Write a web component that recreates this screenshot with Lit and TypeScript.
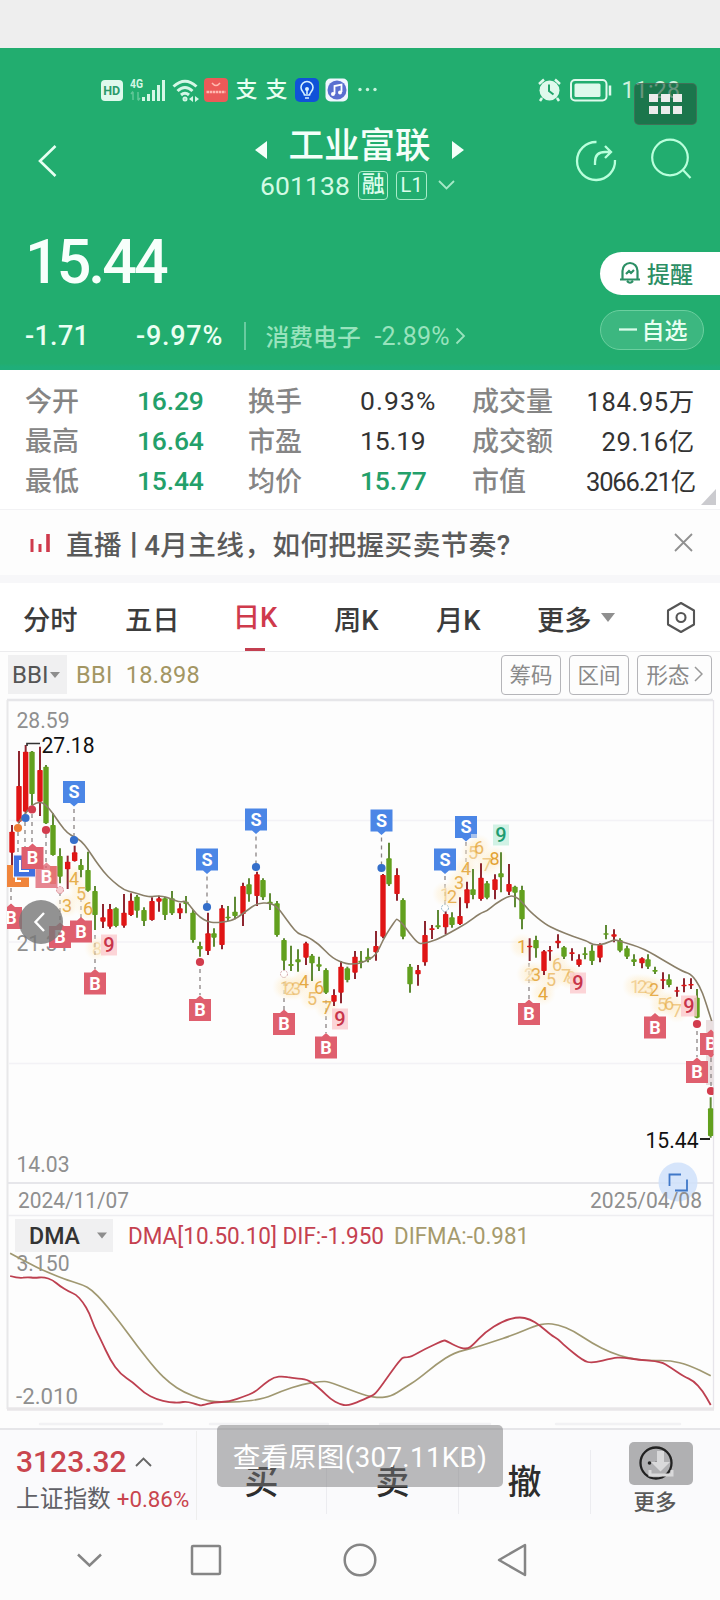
import { LitElement, html, svg, css } from "lit";
import { customElement } from "lit/decorators.js";

type Candle = [number, number, number, number, number, "r" | "g"];
type Pt = [number, number];

/* Candle rows: centre x, high, body top, body bottom, low, colour (in thirds of a pixel per block). */
const BLOCK_A: Candle[] = [
  [36, 405, 425, 488, 525, "r"], [57, 183, 288, 395, 400, "r"], [77, 165, 185, 365, 370, "r"],
  [96, 183, 185, 312, 345, "g"], [120, 170, 240, 335, 378, "r"], [138, 225, 230, 400, 402, "g"],
  [159, 370, 405, 495, 497, "g"], [180, 475, 498, 560, 580, "g"], [203, 497, 515, 538, 597, "r"],
  [224, 467, 487, 513, 515, "r"], [243, 507, 525, 540, 562, "g"], [264, 485, 540, 602, 605, "g"],
  [285, 588, 603, 675, 720, "g"], [309, 642, 682, 695, 714, "r"], [330, 642, 657, 710, 716, "r"],
  [348, 652, 655, 708, 712, "g"], [372, 612, 668, 707, 713, "r"], [393, 610, 632, 675, 678, "r"],
  [411, 615, 620, 662, 683, "g"], [432, 652, 660, 693, 708, "g"], [456, 622, 633, 690, 692, "r"],
  [477, 617, 625, 635, 665, "r"], [495, 620, 625, 675, 690, "g"], [516, 603, 625, 670, 675, "g"],
  [540, 640, 655, 670, 687, "r"], [558, 618, 635, 642, 670, "g"], [579, 660, 668, 750, 758, "g"],
  [600, 755, 768, 778, 800, "g"], [624, 668, 730, 783, 795, "r"], [642, 715, 730, 743, 770, "g"],
  [666, 645, 655, 765, 778, "r"], [684, 648, 680, 685, 693, "g"], [705, 620, 665, 678, 688, "g"],
];
const BLOCK_B: Candle[] = [
  [219, 278, 288, 372, 408, "r"], [237, 265, 283, 313, 335, "g"], [261, 245, 253, 318, 348, "r"],
  [279, 265, 270, 322, 330, "g"], [300, 310, 335, 342, 360, "g"], [321, 333, 340, 435, 440, "g"],
  [342, 445, 450, 512, 540, "g"], [363, 467, 522, 528, 543, "g"], [384, 478, 508, 517, 545, "g"],
  [408, 455, 460, 503, 525, "r"], [426, 492, 497, 520, 573, "g"], [447, 500, 523, 530, 543, "g"],
  [468, 535, 540, 608, 612, "g"], [492, 598, 615, 635, 648, "r"], [513, 513, 530, 608, 640, "r"],
  [532, 530, 535, 570, 577, "g"], [555, 483, 500, 548, 567, "r"], [573, 483, 512, 518, 535, "g"],
  [594, 475, 500, 510, 517, "g"], [618, 423, 468, 487, 512, "r"], [639, 252, 255, 440, 445, "r"],
  [657, 158, 205, 283, 288, "g"], [681, 235, 255, 312, 332, "r"], [699, 325, 330, 440, 448, "g"],
  [720, 522, 530, 583, 608, "g"], [744, 525, 540, 553, 587, "r"], [765, 393, 435, 517, 527, "r"],
  [786, 405, 415, 420, 447, "r"], [804, 360, 406, 412, 417, "g"],
];
const BLOCK_C: Candle[] = [
  [137, 365, 372, 412, 433, "r"], [156, 367, 382, 405, 413, "g"], [180, 322, 378, 402, 405, "r"],
  [201, 275, 298, 340, 355, "r"], [219, 237, 298, 315, 328, "g"], [243, 220, 263, 327, 332, "r"],
  [261, 273, 280, 323, 328, "g"], [285, 253, 268, 300, 328, "r"], [303, 187, 250, 262, 307, "g"],
  [327, 222, 282, 305, 315, "r"], [345, 287, 290, 308, 352, "g"], [366, 287, 300, 388, 418, "g"],
  [389, 445, 467, 471, 513, "r"], [408, 437, 450, 475, 503, "g"], [432, 480, 484, 543, 555, "r"],
  [450, 468, 480, 484, 512, "r"], [474, 433, 452, 460, 475, "r"], [492, 468, 472, 500, 507, "g"],
  [516, 475, 487, 492, 512, "r"], [537, 493, 508, 525, 530, "r"], [555, 472, 490, 495, 508, "g"],
  [576, 465, 482, 513, 525, "g"], [600, 460, 465, 503, 517, "r"], [618, 405, 430, 434, 448, "g"],
  [642, 418, 433, 440, 457, "r"], [660, 445, 450, 482, 487, "g"], [681, 467, 475, 500, 507, "g"],
  [702, 493, 508, 516, 528, "g"], [726, 502, 505, 520, 535, "r"], [744, 493, 508, 530, 537, "g"],
  [765, 530, 540, 545, 552, "g"], [789, 547, 568, 572, 597, "r"], [807, 553, 568, 585, 592, "g"],
  [831, 590, 601, 605, 620, "r"], [852, 565, 584, 588, 607, "r"], [873, 565, 582, 586, 597, "r"],
  [891, 597, 623, 683, 685, "g"], [932, 922, 955, 1038, 1043, "g"],
];

const shift = (rows: Candle[], x0: number, y0: number): Candle[] =>
  rows.map(([x, a, b, c, d, k]) => [x0 + x / 3, y0 + a / 3, y0 + b / 3, y0 + c / 3, y0 + d / 3, k]);
const CANDLES: Candle[] = [...shift(BLOCK_A, 0, 690), ...shift(BLOCK_B, 170, 790), ...shift(BLOCK_C, 400, 790)];

const scale = (pts: Pt[], x0: number, y0: number, kx: number): Pt[] =>
  pts.map(([x, y]) => [x0 + x / kx, y0 + y / 3]);

const BBI: Pt[] = [
  ...scale([[54, 400], [70, 378], [96, 345], [120, 335], [138, 345], [159, 370], [180, 402], [203, 430], [222, 440], [243, 452], [264, 478], [285, 510], [310, 545], [340, 575], [372, 600], [400, 607], [432, 617], [450, 621], [477, 617], [500, 622], [516, 628], [540, 637], [558, 632], [579, 660], [600, 682], [622, 695], [645, 698], [680, 695]], 0, 690, 3),
  ...scale([[195, 388], [230, 362], [261, 340], [300, 338], [321, 350], [342, 378], [363, 407], [384, 432], [408, 438], [447, 462], [487, 505], [530, 522], [555, 522], [580, 517], [618, 497], [639, 450], [660, 415], [679, 388], [682, 388], [699, 402], [720, 432], [742, 457]], 170, 790, 3),
  ...scale([[65, 462], [110, 450], [150, 428], [200, 400], [240, 370], [262, 362], [285, 342], [325, 318], [345, 318], [366, 335], [390, 365], [435, 402], [470, 420], [520, 440], [560, 452], [580, 466], [615, 462], [642, 448], [665, 455], [730, 475], [800, 517], [850, 545], [875, 553], [900, 590], [915, 630], [935, 693]], 400, 790, 3),
];
const DIF = scale([[22, 438], [40, 445], [60, 441], [75, 444], [95, 441], [115, 450], [130, 468], [150, 485], [165, 493], [180, 515], [195, 550], [205, 590], [220, 630], [240, 690], [262, 732], [290, 757], [315, 790], [340, 808], [370, 817], [390, 818], [407, 814], [435, 826], [439, 826], [465, 817], [500, 815], [530, 800], [555, 787], [575, 762], [597, 741], [618, 739], [635, 744], [665, 748], [680, 757], [700, 780], [720, 808], [740, 823], [757, 827], [775, 818], [810, 798], [820, 788], [850, 730], [874, 685], [880, 682], [895, 681], [925, 657], [966, 631], [971, 632], [1000, 653], [1018, 657], [1030, 645], [1055, 608], [1095, 573], [1130, 560], [1155, 568], [1175, 585], [1200, 615], [1215, 627], [1230, 647], [1270, 692], [1290, 700], [1335, 684], [1355, 682], [1390, 689], [1440, 695], [1460, 712], [1490, 740], [1510, 752], [1530, 782], [1548, 825]], 0, 1130, 2.178);
const DIFMA = scale([[22, 370], [60, 398], [100, 425], [150, 452], [180, 464], [200, 480], [225, 515], [260, 575], [300, 650], [340, 720], [370, 760], [400, 787], [440, 808], [465, 816], [520, 817], [575, 806], [610, 785], [660, 762], [700, 754], [715, 755], [760, 778], [800, 798], [825, 803], [850, 800], [880, 775], [910, 748], [950, 703], [990, 667], [1030, 655], [1070, 637], [1120, 614], [1165, 588], [1190, 580], [1215, 584], [1250, 603], [1290, 640], [1330, 668], [1370, 685], [1410, 692], [1460, 691], [1500, 705], [1548, 737]], 0, 1130, 2.178);

/* Smooth curve through the points: quadratic segments joined at midpoints. */
const curve = (p: Pt[]) => {
  let d = `M${p[0][0].toFixed(1)} ${p[0][1].toFixed(1)}`;
  for (let i = 1; i < p.length - 1; i++) {
    const mx = (p[i][0] + p[i + 1][0]) / 2, my = (p[i][1] + p[i + 1][1]) / 2;
    d += `Q${p[i][0].toFixed(1)} ${p[i][1].toFixed(1)} ${mx.toFixed(1)} ${my.toFixed(1)}`;
  }
  const l = p[p.length - 1];
  return d + `L${l[0].toFixed(1)} ${l[1].toFixed(1)}`;
};

/* box centre x, y, signal dot y */
const SELL: [number, number, number][] = [[74, 792, 840], [207, 859.5, 907], [256, 819.5, 867], [381.5, 820.5, 868], [445, 859.5, 0], [466, 827, 0]];
const BUY: [number, number, number][] = [[95, 983.5, 0], [200, 1010, 962], [284, 1024, 0], [326, 1047.5, 0], [529, 1014, 0], [655, 1027.5, 0], [697, 1072, 1024]];
const COUNTS: [string, number, number, number][] = [
  ["4", 74, 878, .85], ["5", 81, 893, .75], ["3", 67, 905, .85], ["6", 88, 908, .9], ["8", 97, 948, .25],
  ["1", 285, 987, .45], ["2", 290, 988, .45], ["3", 296, 988, .5], ["4", 304, 981, .9], ["5", 312, 998, .65], ["6", 319, 987, .9], ["7", 327, 1007, .85],
  ["1", 445, 894, .35], ["2", 452, 896, .8], ["3", 459, 882, .85], ["4", 466, 868, .85], ["5", 473, 852, .5], ["6", 479, 847, .75], ["7", 487, 864, .5], ["8", 494.5, 858, 1],
  ["1", 522, 946, .95], ["2", 529, 974, .25], ["3", 536, 974, .85], ["4", 543, 993, .95], ["5", 551, 979, .6], ["6", 557, 964, .6], ["7", 566, 975, .5], ["8", 571, 977, .4],
  ["1", 635, 986, .4], ["2", 642, 986, .45], ["3", 649, 987, .35], ["2", 654, 989, .85], ["5", 662, 1004, .5], ["6", 669, 1003, .6], ["7", 677, 1010, .5],
];
const NINES: [number, number, boolean][] = [[109, 945, false], [340, 1019, false], [501, 835, true], [578, 983, false], [689, 1006, false]];

const label = (x: number, y: number, w: number, t: string, cls: string, size = 22) =>
  svg`<text class=${cls} x=${x} y=${y} font-size=${size} textLength=${w} lengthAdjust="spacingAndGlyphs">${t}</text>`;
const dot = (x: number, y: number, c: string) => svg`<circle cx=${x} cy=${y} r="4.1" fill=${c} />`;
const leader = (x: number, a: number, b: number) =>
  svg`<path d=${`M${x} ${a}V${b}`} stroke="#8b8484" stroke-width="1.3" stroke-dasharray="4 4" />`;
const sellBox = (x: number, y: number) => svg`
  <path d=${`M${x - 11} ${y - 11}h22v22h-7l-4 3.5l-4 -3.5h-7z`} fill="#4b86e6" />
  <text class="tag" x=${x} y=${y + 6.3}>S</text>`;
const buyBox = (x: number, y: number, o = 1) => svg`<g opacity=${o}>
  <path d=${`M${x - 11} ${y - 11}h7l4 -3.5l4 3.5h7v22h-22z`} fill="#df5f6e" />
  <text class="tag" x=${x} y=${y + 6.3}>B</text></g>`;

@customElement("stock-chart")
export class StockChart extends LitElement {
  static styles = css`
    :host { display: block; }
    svg { display: block; font-family: Roboto, "Liberation Sans", sans-serif; }
    .axis { fill: #8f8f8f; }
    .black { fill: #111; }
    .dark { fill: #333; font-weight: 500; }
    .red { fill: #c54150; }
    .gold { fill: #a59a6c; }
    .tag { fill: #fff; font-size: 18px; font-weight: 700; text-anchor: middle; }
    .count { fill: #e3a233; font-size: 18px; text-anchor: middle; }
    .nine { font-size: 20px; font-weight: 500; text-anchor: middle; }
  `;
  render() {
    return html`<svg width="720" height="732" viewBox="0 696 720 732" fill="none">
      <defs>
        <clipPath id="plot"><rect x="7" y="699" width="706.5" height="500" /></clipPath>
        <radialGradient id="glow"><stop offset="0" stop-color="#fdebc4" stop-opacity=".6" /><stop offset=".6" stop-color="#feefd2" stop-opacity=".4" /><stop offset="1" stop-color="#fff4e0" stop-opacity="0" /></radialGradient>
      </defs>
      <path d="M7 700H713" stroke="#e6e6e9" stroke-width="2.4" />
      <path d="M7.5 700V1409" stroke="#e8e8e9" stroke-width="2" />
      <path d="M713.5 700V1409" stroke="#e6e4ea" stroke-width="1.3" />
      <path d="M9 820.5H713M9 942H713M9 1063.5H713" stroke="#f3f2f6" stroke-width="1.5" />
      <path d="M8 1183H713" stroke="#e6e6ea" stroke-width="2" />
      <path d="M8 1215.5H713" stroke="#eeeef1" stroke-width="1.5" />
      <path d="M7 1409H714" stroke="#e8e6e8" stroke-width="3.5" />
      <path d="M40 1424H162M210 1424H328M380 1424H490M556 1424H680" stroke="#f2f2f4" stroke-width="2.5" stroke-linecap="round" />

      ${label(16.5, 728, 53, "28.59", "axis")}
      ${label(16.5, 951, 53, "21.31", "axis")}
      ${label(16.5, 1171.5, 53, "14.03", "axis")}
      ${label(18, 1207.5, 111, "2024/11/07", "axis")}

      <g clip-path="url(#plot)">
        ${leader(18, 832, 865)}${leader(25, 822, 855)}${leader(32, 814, 846)}${leader(46, 834, 868)}${leader(11, 888, 906)}
        ${leader(60, 892, 925)}${leader(81, 898, 920)}${leader(95, 935, 969)}${leader(284, 974, 1010)}${leader(326, 1000, 1033)}${leader(529, 963, 1000)}${leader(445, 876, 908)}${leader(466, 842, 872)}
        <rect x="706" y="1020" width="8" height="65" fill="#e9dfe0" />${leader(711, 1058, 1087)}
        <circle cx="60" cy="890" r="3.5" fill="#f6cfd2" stroke="#dc8e95" stroke-dasharray="2 1" />
        <circle cx="284" cy="974" r="3.5" fill="#fff" stroke="#d3a5aa" stroke-dasharray="2 1" />
        <circle cx="445" cy="908" r="3.5" fill="#fff" stroke="#8fb4c8" stroke-dasharray="2 1" />
        ${COUNTS.map(([, x, y]) => svg`<circle cx=${x} cy=${y} r="13" fill="url(#glow)" />`)}
        ${CANDLES.map(([x, a, b, c, d, k]) => svg`
          <path d=${`M${x} ${a}V${d}`} stroke=${k === "r" ? "#8e2630" : "#5f8a35"} stroke-width="2" />
          <rect x=${x - 2.7} y=${b} width="5.4" height=${Math.max(c - b, 1.5)} rx=".8" fill=${k === "r" ? "#e01515" : "#62a01e"} />`)}
        <path d=${curve(BBI)} stroke="#8a7f68" stroke-width="1.6" />
        ${COUNTS.map(([t, x, y, o]) => svg`<text class="count" x=${x} y=${y + 6.5} opacity=${o}>${t}</text>`)}
        ${NINES.map(([x, y, up]) => svg`
          <rect x=${x - 8} y=${y - 10.5} width="16" height="21" fill=${up ? "#c5efdf" : "#fbc9cd"} opacity=".8" />
          <text class="nine" x=${x} y=${y + 7} fill=${up ? "#1f9c70" : "#c8344a"}>9</text>`)}
        ${SELL.map(([x, y, d]) => svg`${d ? svg`${leader(x, y + 17, d - 3)}${dot(x, d, "#356fca")}` : ""}${sellBox(x, y)}`)}
        <path d="M471 834h6v4h-6z" fill="#a9c2ec" />
        ${BUY.map(([x, y, d]) => svg`${d ? svg`${leader(x, d + 7, y - 15)}${dot(x, d, "#d23c4d")}` : ""}${buyBox(x, y)}`)}
        ${buyBox(711, 1044)}<path d="M707 1054l4 4l4 -4z" fill="#df5f6e" />
        ${dot(711, 1091, "#d23c4d")}
        <rect x="7" y="865" width="22" height="22" fill="#f0853c" /><path d="M16 872v9h5" stroke="#fff" stroke-width="2" />
        <rect x="13.5" y="855" width="22" height="22" fill="#4070e0" stroke="#f5f2fa" stroke-width="1" /><path d="M20 860v11h9" stroke="#fff" stroke-width="2" />
        <rect x="50" y="866" width="6" height="18" fill="#f6b183" />
        ${buyBox(46.5, 877, .75)}${buyBox(32.5, 858)}
        ${buyBox(11, 918)}${buyBox(60, 937)}${buyBox(81, 931.5)}
        ${dot(18, 828, "#ee7d33")}${dot(25.5, 818, "#356fca")}${dot(32, 809.5, "#d23c4d")}${dot(46, 830, "#d23c4d")}
      </g>
      <path d="M27 746V743.5H40" stroke="#333" stroke-width="1.7" />
      ${label(41.5, 753, 53, "27.18", "black")}
      <circle cx="41" cy="922" r="22" fill="#777" opacity=".8" />
      <path d="M44 913L35.5 922L44 931" stroke="#fff" stroke-width="2.4" />
      ${label(645.5, 1148, 53, "15.44", "black")}
      <path d="M700 1139H710" stroke="#222" stroke-width="2" />

      <circle cx="678" cy="1182" r="19.5" fill="#cfe0fa" opacity=".85" />
      <path d="M669.5 1186V1174.5H681M675 1190.5H687V1179.5" stroke="#4078c8" stroke-width="1.8" />
      ${label(590, 1207.5, 112, "2025/04/08", "axis")}

      <rect x="15" y="1219" width="98" height="33" fill="#f0f0f1" />
      ${label(29, 1244, 51, "DMA", "dark", 23)}
      <path d="M97 1232.5h10l-5 6z" fill="#8d8d8d" />
      ${label(128, 1244, 256, "DMA[10.50.10] DIF:-1.950", "red", 23)}
      ${label(394, 1244, 135, "DIFMA:-0.981", "gold", 23)}
      ${label(16.5, 1271, 53, "3.150", "axis")}
      ${label(16, 1404, 62, "-2.010", "axis")}
      <path d=${curve(DIFMA)} stroke="#a09871" stroke-width="1.7" />
      <path d=${curve(DIF)} stroke="#bd4050" stroke-width="1.8" />
    </svg>`;
  }
}

const STATS: [string, string, string, string, string, string][] = [
  ["今开", "16.29", "换手", "0.93%", "成交量", "184.95万"],
  ["最高", "16.64", "市盈", "15.19", "成交额", "29.16亿"],
  ["最低", "15.44", "均价", "15.77", "市值", "3066.21亿"],
];

@customElement("app-root")
export class AppRoot extends LitElement {
  static styles = css`
    :host { display: block; width: 720px; height: 1600px; overflow: hidden; position: relative; background: #fdfdfd;
      font-family: Roboto, "Noto Sans CJK SC", sans-serif; color: #333; white-space: nowrap; }
    * { box-sizing: border-box; }
    svg { display: block; flex: none; }
    .gap-top { height: 48px; background: #eee; }
    .hero { height: 322px; background: linear-gradient(#22ad6f 98%, #1fae79 99%); color: #eafff2; }
    .status { height: 84px; padding-left: 101px; display: flex; align-items: center; }
    .hd { width: 21.5px; height: 21px; border-radius: 4px; background: #dff9ec; color: #2b9a6a; font: 700 12.5px/21px Roboto; text-align: center; }
    .sig { margin-left: 7px; } .wifi { margin-left: 6px; } .app { margin-left: 4px; } .app2 { margin-left: 7px; } .app3 { margin-left: 6px; }
    .dots { margin-left: 9px; } .alarm { margin-left: 159px; } .batt { margin-left: 8px; }
    .zhi { font-size: 22px; font-weight: 500; width: 22px; margin-left: 8px; line-height: 24px; }
    .clock { font-size: 23px; letter-spacing: .3px; margin-left: 9px; opacity: .85; }
    .title { display: flex; height: 78px; padding-left: 38px; }
    .back { margin-top: 12px; }
    .names { margin-left: 199px; width: 207px; }
    .name { display: flex; align-items: center; height: 36px; width: 209px; justify-content: space-between; margin-left: -2px; font-size: 35.5px; font-weight: 500; color: #f4fff9; line-height: 36px; }
    .name span { margin-top: -8px; }
    .code { display: flex; align-items: center; height: 38px; margin: -2px 0 0 3px; font-size: 26.5px; color: #d2fae4; letter-spacing: .1px; }
    .chip { border: 1.5px solid #a8ecc9; border-radius: 4px; width: 30.5px; height: 29px; margin-left: 8px; display: grid; place-items: center; font-size: 23px; line-height: 26px; color: #dcfcec; font-weight: 500; }
    .chip.l { font-size: 20px; font-weight: 400; }
    .drop { margin-left: 11px; }
    .share { margin: 8px 0 0 111px; } .search { margin: 6px 0 0 33px; }
    .price-row { display: flex; justify-content: space-between; height: 100px; }
    .price { font-size: 61px; font-weight: 500; line-height: 105px; padding-left: 25px; letter-spacing: -3px; color: #f7fffb; }
    .pill { display: flex; align-items: center; height: 43px; width: 120px; border-radius: 22px 0 0 22px; background: #fff; color: #2c8f65; font-size: 23px; font-weight: 500; padding: 0 0 2px 19px; gap: 6px; margin-top: 42px; }
    .change-row { display: flex; align-items: center; height: 46px; margin-top: 3px; font-size: 27px; font-weight: 500; }
    .chg { width: 86px; margin-left: 25px; letter-spacing: .3px; } .pct { width: 108px; margin-left: 25px; letter-spacing: .75px; }
    .bar { width: 1.5px; height: 28px; background: #69cba0; }
    .sector { font-size: 23.8px; font-weight: 500; color: #98e3bd; margin: -2px 0 0 20px; width: 109px; }
    .spct { font-size: 25px; font-weight: 400; color: #98e3bd; width: 80px; letter-spacing: .2px; }
    .watch { width: 104px; height: 40px; border: 1.5px solid #6bcf9f; background: rgba(255,255,255,.12); border-radius: 21px; display: flex; align-items: center; margin: -12px 0 0 134px; padding: 0 0 2px 18px; gap: 5px; font-size: 23px; }
    .stats { height: 140px; padding: 12px 0 0 25px; display: grid; grid-template: repeat(3, 40px) / 112px 111px 112px 112px 84px 139px; align-items: center; font-size: 27px; background: #fff; position: relative; border-bottom: 1.5px solid #f2f2f4; }
    .k { color: #858585; font-weight: 500; } .g { color: #23a06a; font-weight: 500; } .v { color: #333; }
    .k, .v { line-height: 38px; } .num { letter-spacing: -.2px; font-size: 26.5px; padding-bottom: 3px; line-height: 35px; }
    .pc { letter-spacing: 1.1px; }
    .end { text-align: right; font-size: 25.5px; letter-spacing: .65px; }
    .tight { letter-spacing: -1.15px; }
    .corner { position: absolute; right: 4px; bottom: 4px; width: 15px; height: 16px; background: #cbcbcf; clip-path: polygon(100% 0, 100% 100%, 0 100%); }
    .news { height: 65px; display: flex; align-items: center; padding: 0 27px 0 30px; font-size: 27.6px; color: #5a5a5a; font-weight: 500; }
    .news .t { flex: 1; margin-left: 16px; letter-spacing: .45px; }
    .news .sep { margin: 0 -4px 0 -2px; }
    .split { height: 8px; background: #f7f7f9; }
    .tabs { height: 69px; border-bottom: 1.5px solid #ececee; display: grid; grid-template-columns: 102px 108px 101px 102px 101px 129px 1fr; align-items: center; padding: 1px 0 0 23px; font-size: 27.3px; font-weight: 500; color: #3c3c3c; background: #fff; }
    .on { color: #cf3a4c; height: 100%; width: 44px; display: flex; flex-direction: column; align-items: center; justify-content: space-between; padding-top: 15px; line-height: 38px; }
    .on i { width: 20px; height: 3.5px; background: #c33f50; }
    .more { display: flex; align-items: center; gap: 9px; }
    .ind { height: 44px; padding: 3px 8px 2px; display: flex; align-items: center; gap: 8px; }
    .bbi { width: 59px; height: 39px; background: #f0f0f1; display: flex; align-items: center; padding-left: 4px; font-size: 24px; gap: 2px; color: #555; }
    .gold { font-size: 23.5px; color: #a39663; flex: 1; display: flex; gap: 13px; letter-spacing: .35px; margin-left: 1px; }
    .btn { border: 1.5px solid #b5b5b9; border-radius: 4px; height: 40px; width: 60px; display: flex; justify-content: center; align-items: center; font-size: 21.5px; color: #8a8a8a; gap: 4px; padding-bottom: 2px; }
    .btn.w { width: 75px; }
    .dock { height: 92px; background: #fafafc; border-top: 2.5px solid #e6e6e9; display: grid; grid-template-columns: 197px 130px 132px 132px 1fr; align-items: center; }
    .idx { padding-left: 16px; height: 89px; border-right: 1px solid #eee; }
    .i1 { display: flex; align-items: center; gap: 8px; font-size: 30px; font-weight: 500; color: #c9454e; height: 38px; margin-top: 12px; line-height: 38px; }
    .i2 { display: flex; align-items: center; gap: 6px; font-size: 23.7px; color: #606066; line-height: 36px; }
    .i2 b { font-size: 22.3px; font-weight: 400; color: #c9454e; }
    .act { font-size: 34px; font-weight: 500; text-align: center; color: #2d2d2d; height: 64px; border-right: 1px solid #ececf0; line-height: 65px; margin-top: 14px; }
    .dmore { display: flex; flex-direction: column; align-items: center; font-size: 21.5px; font-weight: 500; color: #5a5a5a; line-height: 30px; gap: 3px; padding: 9px 1px 0 0; }
    .shade { width: 64px; height: 43px; border-radius: 5px; background: #b0b0b2; margin-left: 11px; }
    .nav { height: 80px; display: flex; align-items: center; background: #fcfcfc; padding-left: 76px; }
    .n2 { margin-left: 87px; } .n3 { margin-left: 121px; } .n4 { margin-left: 120px; }
    .grid-btn { position: absolute; left: 634px; top: 83px; width: 63px; height: 42px; border-radius: 5px; background: rgba(22,72,48,.55); border: 1px solid rgba(90,110,95,.6); display: grid; grid-template: repeat(2, 8.5px) / repeat(3, 8.5px); gap: 3.3px; place-content: center; }
    .grid-btn i { background: #ececec; }
    .toast { position: absolute; left: 217px; top: 1425px; width: 286px; height: 62px; border-radius: 5px; background: rgba(120,120,122,.5); color: #fff; font-size: 27.6px; display: grid; place-items: center; line-height: 66px; letter-spacing: .4px; }
  `;
  render() {
    return html`
      <div class="gap-top"></div>
      <div class="hero">
        <div class="status">
          <span class="hd">HD</span>
          <svg class="sig" width="36" height="24" viewBox="0 0 36 24" fill="#d5f7e6">
            <text x="0" y="10" font-size="13" font-weight="700" textLength="13" lengthAdjust="spacingAndGlyphs" font-family="Roboto">4G</text>
            <path d="M3 14v8M1 16l2-2.5M8 14v8M10 20l-2 2.5" stroke="#62c799" stroke-width="1.5" />
            <path d="M12 19h3v4h-3zM17 16h3v7h-3zM22 12h3v11h-3zM27 7h3v16h-3zM32 2h3v21h-3z" />
          </svg>
          <svg class="wifi" width="28" height="24" viewBox="0 0 28 24" fill="none" stroke="#d5f7e6" stroke-width="3">
            <path d="M1.5 8.5Q13 -2 24.5 8.5M5.5 13Q13 6 20.5 13M9 17Q13 13.5 17 17" /><circle cx="13" cy="21" r="1" /><path d="M21 18l-4 3l4 3zM23 18l4 3l-4 3z" fill="#d5f7e6" stroke="none" />
          </svg>
          <svg class="app" width="24" height="24" viewBox="0 0 24 24" fill="none"><rect width="24" height="24" rx="4" fill="#ec5a58" /><path d="M8 5q4 5 8 0" stroke="#ffb9b0" stroke-width="1.5" /><path d="M2.5 14h19" stroke="#ffb9b0" stroke-width="2.5" stroke-dasharray="2.5 .6" /></svg>
          <span class="zhi">支</span><span class="zhi">支</span>
          <svg class="app2" width="24" height="24" viewBox="0 0 24 24" fill="none" stroke="#d5f0ff" stroke-width="1.6"><rect width="24" height="24" rx="5" fill="#1052d8" stroke="none" /><path d="M9.5 17C9 14 6 13 6 9.500a6 6 0 0 1 12 0C18 13 15 14 14.500 17zM10 20h4M12 16v-4" /><circle cx="12" cy="11" r="1.200" fill="#fff" /></svg>
          <svg class="app3" width="24" height="24" viewBox="0 0 24 24" fill="none"><rect x=".5" y=".5" width="22.5" height="23" rx="5" fill="#f0f6ff" /><circle cx="12" cy="12" r="9.5" fill="#5a6fd0" /><path d="M9.5 16V8l7-1.500V14" stroke="#fff" stroke-width="1.8" /><circle cx="8" cy="16" r="2" fill="#fff" /><circle cx="15" cy="14.5" r="2" fill="#fff" /></svg>
          <svg class="dots" width="20" height="6" viewBox="0 0 20 6" fill="#c9f3dd"><circle cx="2" cy="2.5" r="1.7" /><circle cx="9.5" cy="2.5" r="1.7" /><circle cx="17" cy="2.5" r="1.7" /></svg>
          <svg class="alarm" width="25" height="24" viewBox="0 0 25 24" fill="#dff9ec"><circle cx="12.5" cy="12.5" r="10" /><path d="M2 6l5-4.5M23 6l-5-4.500M5 20l-2 3M20 20l2 3" stroke="#dff9ec" stroke-width="2.5" /><path d="M12 6.500v6.500l4.500 3.500" stroke="#23a56c" stroke-width="2" fill="none" /></svg>
          <svg class="batt" width="43" height="24" viewBox="0 0 43 24" fill="none"><rect x="1" y="2" width="35.5" height="20.5" rx="4" stroke="#dff9ec" stroke-width="2" /><rect x="4.5" y="5.5" width="26" height="13.5" rx="1.5" fill="#dff9ec" /><path d="M40 7.500v10" stroke="#dff9ec" stroke-width="2.5" /></svg>
          <span class="clock">11:28</span>
        </div>
        <div class="title">
          <svg class="back" width="20" height="34" viewBox="0 0 20 34" fill="none" stroke="#e6fff2" stroke-width="2.6"><path d="M17.500 2L2 17L17.500 32" /></svg>
          <div class="names">
            <div class="name">
              <svg width="13" height="18" viewBox="0 0 13 18" fill="#f4fff9"><path d="M12 0v18L0 9z" /></svg>
              <span>工业富联</span>
              <svg width="13" height="18" viewBox="0 0 13 18" fill="#f4fff9"><path d="M1 0v18l12-9z" /></svg>
            </div>
            <div class="code">601138<span class="chip">融</span><span class="chip l">L1</span>
              <svg class="drop" width="17" height="10" viewBox="0 0 17 10" fill="none" stroke="#a5e9c7" stroke-width="1.8"><path d="M1 1l7.500 7.500L16 1" /></svg></div>
          </div>
          <svg class="share" width="42" height="42" viewBox="0 0 42 42" fill="none" stroke="#b9ffdc" stroke-width="2.3"><path d="M21.500 2A19 19 0 1 0 40 20M20 25v-3q0-10 10-10h6M30 6l6 6l-6 6" /></svg>
          <svg class="search" width="42" height="42" viewBox="0 0 42 42" fill="none" stroke="#b9ffdc" stroke-width="2.2"><circle cx="20" cy="19.5" r="17.8" /><path d="M33 32l7.500 8" /></svg>
        </div>
        <div class="price-row">
          <span class="price">15.44</span>
          <span class="pill"><svg width="22" height="24" viewBox="0 0 22 24" fill="none" stroke="#2c8f65" stroke-width="2.2"><path d="M3.500 18V10a7.500 8 0 0 1 15 0v8M1 18.500h20M8 20q3 3.500 6 0M7 13l3-3l2 2l3-3" /></svg>提醒</span>
        </div>
        <div class="change-row">
          <span class="chg">-1.71</span><span class="pct">-9.97%</span><span class="bar"></span>
          <span class="sector">消费电子</span><span class="spct">-2.89%</span>
          <svg width="11" height="18" viewBox="0 0 11 18" fill="none" stroke="#98e3bd" stroke-width="1.8"><path d="M1.500 1.500L9 9l-7.500 7.500" /></svg>
          <span class="watch"><svg width="18" height="3" viewBox="0 0 18 3"><path d="M0 1.500h18" stroke="#d9fbe9" stroke-width="2.3" /></svg>自选</span>
        </div>
      </div>
      <div class="stats">
        ${STATS.map((r, i) => html`
          <span class="k">${r[0]}</span><span class="g num">${r[1]}</span>
          <span class="k">${r[2]}</span><span class="num ${i === 2 ? "g" : "v"} ${i === 0 ? "pc" : ""}">${r[3]}</span>
          <span class="k">${r[4]}</span><span class="v end ${i === 2 ? "tight" : ""}">${r[5]}</span>`)}
        <i class="corner"></i>
      </div>
      <div class="news">
        <svg width="20" height="20" viewBox="0 0 20 20" stroke="#cf3a4c" stroke-width="3"><path d="M2 19V6M10 19v-8" /><path d="M18 19V1" stroke-width="3.6" /></svg>
        <span class="t">直播<span class="sep">丨</span>4月主线，如何把握买卖节奏?</span>
        <svg width="19" height="19" viewBox="0 0 19 19" stroke="#909090" stroke-width="1.8"><path d="M1 1l17 17M18 1L1 18" /></svg>
      </div>
      <div class="split"></div>
      <div class="tabs">
        <span>分时</span><span>五日</span><span class="on">日K<i></i></span><span>周K</span><span>月K</span>
        <span class="more">更多<svg width="14" height="9" viewBox="0 0 14 9" fill="#8f8f8f"><path d="M0 0h14l-7 9z" /></svg></span>
        <svg width="30" height="33" viewBox="0 0 30 33" fill="none" stroke="#555" stroke-width="2.1"><path d="M15 2L28 9.500v14L15 31L2 23.500v-14z" stroke-linejoin="round" /><circle cx="15" cy="16.5" r="4.500" /></svg>
      </div>
      <div class="ind">
        <span class="bbi">BBI<svg width="10" height="6" viewBox="0 0 10 6" fill="#8d8d8d"><path d="M0 0h10l-5 6z" /></svg></span>
        <span class="gold"><span>BBI</span><span>18.898</span></span>
        <span class="btn">筹码</span><span class="btn">区间</span>
        <span class="btn w">形态<svg width="9" height="16" viewBox="0 0 9 16" fill="none" stroke="#999" stroke-width="1.5"><path d="M1 1l7 7l-7 7" /></svg></span>
      </div>
      <stock-chart></stock-chart>
      <div class="dock">
        <div class="idx">
          <div class="i1">3123.32<svg width="17" height="10" viewBox="0 0 17 10" fill="none" stroke="#666" stroke-width="1.9"><path d="M1 9l7.500-7.500L16 9" /></svg></div>
          <div class="i2">上证指数<b>+0.86%</b></div>
        </div>
        <span class="act">买</span><span class="act">卖</span><span class="act">撤</span>
        <div class="dmore">
          <svg class="shade" width="64" height="43" viewBox="0 0 64 43" fill="none"><circle cx="27" cy="21" r="15.5" stroke="#222" stroke-width="2.3" /><circle cx="20.5" cy="21" r="1.8" fill="#222" /><circle cx="27" cy="21" r="1.6" fill="#555" /><path d="M28 9h7v11h6L31.500 29.500L22 20h6z" fill="#d9d9da" /><path d="M21 28v5h22v-5" stroke="#d9d9da" stroke-width="3" /></svg>
          更多
        </div>
      </div>
      <div class="nav">
        <svg width="27" height="14" viewBox="0 0 27 14" fill="none" stroke="#858585" stroke-width="2.5"><path d="M2 1.500L13.500 12.500L25 1.500" /></svg>
        <svg class="n2" width="32" height="32" viewBox="0 0 32 32" fill="none" stroke="#858585" stroke-width="2.5"><rect x="2" y="2" width="28" height="28" rx="1" /></svg>
        <svg class="n3" width="34" height="34" viewBox="0 0 34 34" fill="none" stroke="#858585" stroke-width="2.5"><circle cx="17" cy="17" r="15.3" /></svg>
        <svg class="n4" width="30" height="34" viewBox="0 0 30 34" fill="none" stroke="#858585" stroke-width="2.5" stroke-linejoin="round"><path d="M28 2v30L2 17z" /></svg>
      </div>
      <div class="grid-btn"><i></i><i></i><i></i><i></i><i></i><i></i></div>
      <div class="toast">查看原图(307.11KB)</div>
    `;
  }
}
